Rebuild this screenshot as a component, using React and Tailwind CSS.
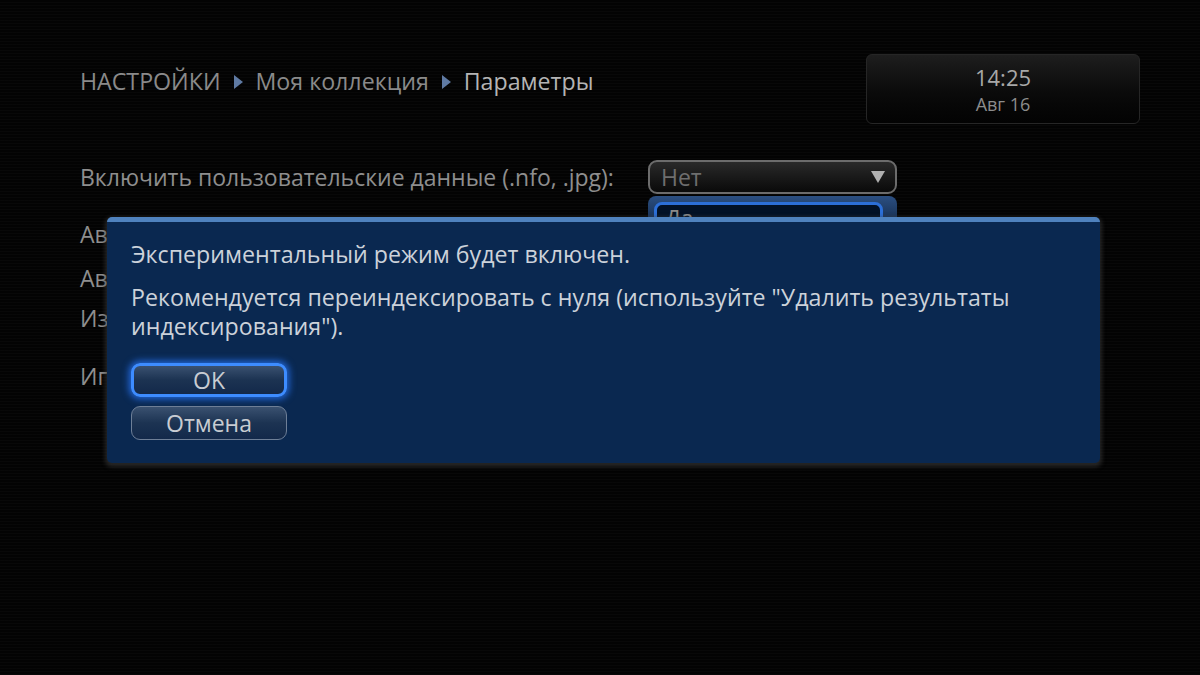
import React from 'react'

const FONT = { fontFamily: '"Open Sans", "Noto Sans", sans-serif' }

function Crumb({ children, active }) {
  return (
    <span className={active ? 'text-[#b4b4b4]' : 'text-[#8a8a8a]'}>{children}</span>
  )
}

function Sep() {
  return (
    <svg width="11" height="16" viewBox="0 0 11 16" className="mx-[12px] mt-[2px]">
      <path d="M1 1 L10 8 L1 15 Z" fill="#5f7aa3" />
    </svg>
  )
}

function Clock() {
  return (
    <div className="w-[274px] h-[70px] rounded-[6px] border border-[#262626] bg-gradient-to-b from-[#1e1e1e] via-[#0c0c0c] to-[#030303] flex flex-col items-center justify-center">
      <div className="text-[22px] leading-[26px] text-[#a8a8a8]">14:25</div>
      <div className="text-[18px] leading-[22px] text-[#8c8c8c] mt-[3px]">Авг 16</div>
    </div>
  )
}

function Row({ label, className = '' }) {
  return <div className={'text-[23px] text-[#8e8e8e] leading-[28px] ' + className}>{label}</div>
}

function Button({ children, focused }) {
  return (
    <button
      className={
        'w-[156px] h-[34px] rounded-[9px] text-[23px] leading-none text-[#c8ccd2] bg-gradient-to-b from-[#3a5170] via-[#1c3352] to-[#13294a] ' +
        (focused
          ? 'border-[3px] border-[#3d8cff] shadow-[0_0_7px_2px_rgba(40,120,255,0.8)]'
          : 'border border-[#6e7f97]')
      }
    >
      {children}
    </button>
  )
}

export default function App() {
  return (
    <div
      className="relative w-[1200px] h-[675px] overflow-hidden bg-[#030303]"
      style={FONT}
    >
      {/* faint scanline texture */}
      <div className="absolute inset-0 bg-[repeating-linear-gradient(0deg,rgba(255,255,255,0.018)_0px,rgba(255,255,255,0.018)_1px,transparent_1px,transparent_3px)]" />

      <div className="relative pl-[80px] pr-[60px] pt-[54px]">
        {/* Header */}
        <div className="flex items-start justify-between">
          <div className="flex items-center text-[23.2px] leading-[30px] mt-[12px]">
            <Crumb>НАСТРОЙКИ</Crumb>
            <Sep />
            <Crumb>Моя коллекция</Crumb>
            <Sep />
            <Crumb active>Параметры</Crumb>
          </div>
          <Clock />
        </div>

        {/* Settings */}
        <div className="mt-[36px] flex items-center">
          <Row label="Включить пользовательские данные (.nfo, .jpg):" className="w-[568px]" />
          <div className="relative">
            <div className="w-[249px] h-[34px] rounded-[9px] border-2 border-[#6c6c6c] bg-gradient-to-b from-[#2a2a2a] to-[#0a0a0a] flex items-center justify-between pl-[11px] pr-[10px]">
              <span className="text-[23px] text-[#6e6e6e]">Нет</span>
              <svg width="14" height="12" viewBox="0 0 14 12">
                <path d="M0 0 H14 L7 12 Z" fill="#b0b0b0" />
              </svg>
            </div>
            {/* open list (mostly covered by dialog) */}
            <div className="absolute left-0 top-[36px] w-[249px] h-[40px] rounded-t-[8px] bg-gradient-to-b from-[#2b4f82] to-[#0c1e38] pl-[6px] pr-[14px] pt-[6px]">
              <div className="h-[40px] rounded-[8px] border-[3px] border-[#2c6fd8] bg-[#021126] px-[8px] text-[23px] text-[#8a8a8a] leading-[26px]">Да</div>
            </div>
          </div>
        </div>
        <Row label="Автоматически обновлять коллекцию:" className="mt-[26px]" />
        <Row label="Автоматически искать обложки:" className="mt-[16px]" />
        <Row label="Изменить расположение папок:" className="mt-[12px]" />
        <Row label="Игнорировать скрытые файлы:" className="mt-[30px]" />
      </div>

      {/* Dialog */}
      <div className="absolute left-[107px] top-[217px] w-[993px] h-[246px] rounded-[5px] bg-[#0a2850] border-t-[5px] border-t-[#4f82be] shadow-[0_2px_4px_2px_rgba(60,60,60,0.6)] px-[24px] pt-[17px]">
        <div className="text-[23.2px] leading-[30px] text-[#ccd2da]">
          Экспериментальный режим будет включен.
        </div>
        <div className="mt-[14px] text-[23.2px] leading-[29px] text-[#ccd2da] w-[900px]">
          Рекомендуется переиндексировать с нуля (используйте "Удалить результаты индексирования").
        </div>
        <div className="mt-[22px] flex flex-col gap-[9px]">
          <Button focused>OK</Button>
          <Button>Отмена</Button>
        </div>
      </div>
    </div>
  )
}
